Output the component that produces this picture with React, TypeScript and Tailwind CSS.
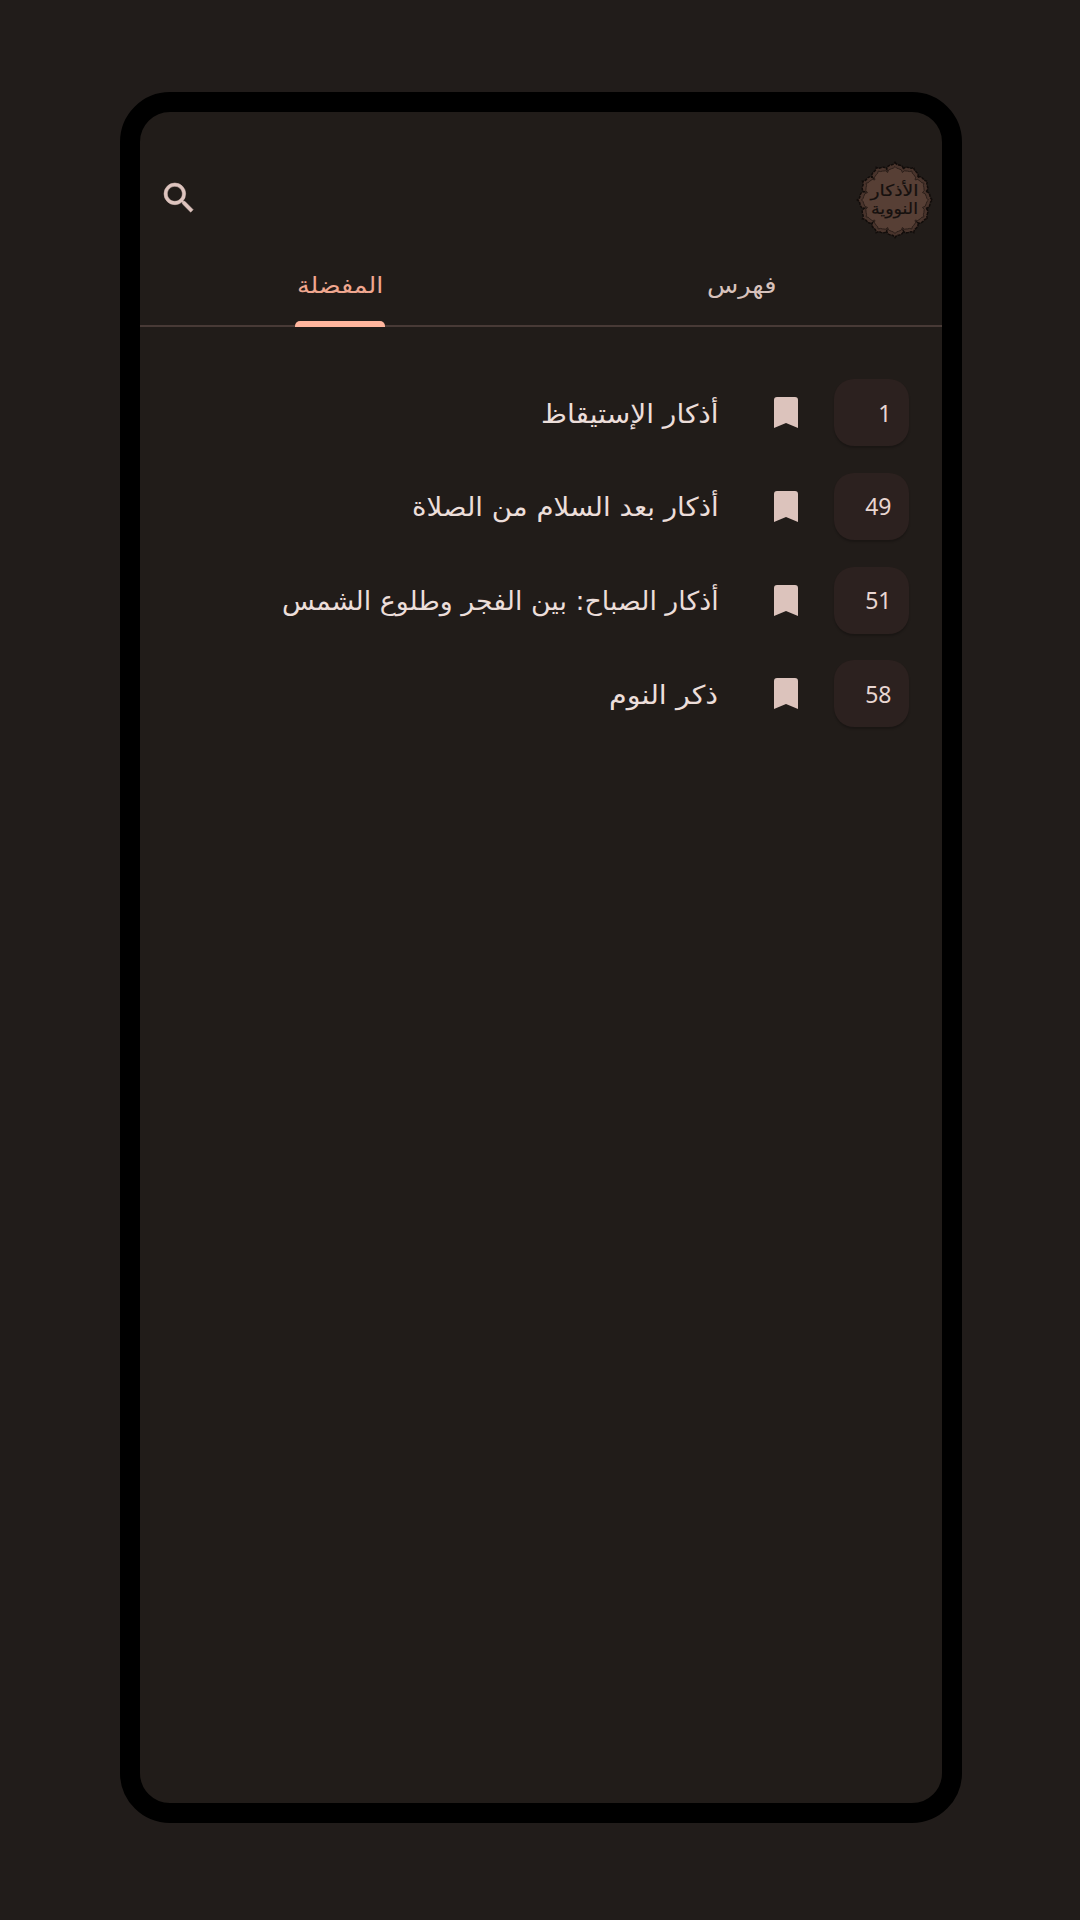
import React from "react";

const rows = [
  { n: "1", text: "أذكار الإستيقاظ", width: 178 },
  { n: "49", text: "أذكار بعد السلام من الصلاة", width: 307 },
  { n: "51", text: "أذكار الصباح: بين الفجر وطلوع الشمس", width: 437 },
  { n: "58", text: "ذكر النوم", width: 109 },
];

/* Arabic label condensed or widened to a fixed measure. */
function Label({ text, width, className }: { text: string; width: number; className: string }) {
  const ref = React.useRef<HTMLSpanElement>(null);
  const [scale, setScale] = React.useState(1);
  React.useLayoutEffect(() => {
    if (ref.current) setScale(width / ref.current.offsetWidth);
  }, [width]);
  return (
    <div className="flex justify-start" style={{ width }}>
      <span
        ref={ref}
        className={`block shrink-0 origin-right whitespace-nowrap ${className}`}
        style={{ transform: `scaleX(${scale})` }}
      >
        {text}
      </span>
    </div>
  );
}

function badgePath(r: number) {
  const petals = 12;
  let d = "";
  for (let i = 0; i < petals; i++) {
    const step = (Math.PI * 2) / petals;
    const a = i * step - Math.PI / 2;
    const p = (ang: number, rad: number) =>
      `${(37 + Math.cos(ang) * rad).toFixed(2)} ${(37 + Math.sin(ang) * rad).toFixed(2)}`;
    if (i === 0) d += `M${p(a, r)}`;
    d += `Q${p(a + step * 0.08, r * 0.94)} ${p(a + step * 0.22, r * 0.94)}`;
    d += `Q${p(a + step * 0.45, r * 0.94)} ${p(a + step * 0.5, r * 0.85)}`;
    d += `Q${p(a + step * 0.55, r * 0.94)} ${p(a + step * 0.78, r * 0.94)}`;
    d += `Q${p(a + step * 0.92, r * 0.94)} ${p(a + step, r)}`;
  }
  return d + "Z";
}

function Logo() {
  return (
    <svg width="74" height="74" viewBox="0 0 74 74" className="mt-px block overflow-visible">
      <path d={badgePath(37.5)} fill="#49342c" stroke="#110c0a" strokeWidth="1.5" strokeDasharray="3 0.8" />
      <path d={badgePath(33.5)} fill="#573f35" stroke="#2b1e19" strokeWidth="1" />
      <g
        fill="#15100e"
        stroke="#15100e"
        strokeWidth="0.2"
        textAnchor="middle"
        fontFamily="'DejaVu Sans', sans-serif"
        fontSize="16"
        direction="rtl"
      >
        <text x="36.5" y="32.5" textLength="48" lengthAdjust="spacingAndGlyphs">الأذكار</text>
        <text x="36.5" y="51.3" textLength="47" lengthAdjust="spacingAndGlyphs">النووية</text>
      </g>
    </svg>
  );
}

export default function App() {
  return (
    <div
      dir="rtl"
      className="h-[1920px] w-[1080px] overflow-hidden bg-[#211c1a] pt-[92px] pr-[118px] font-['DejaVu_Sans',sans-serif]"
    >
      <div className="h-[1731px] w-[842px] rounded-[50px] border-20 border-black bg-[#211c19]">
        <header className="flex h-[137px] items-start justify-between pt-[50px] pr-[10px] pl-[19px]">
          <Logo />
          <svg
            width="40"
            height="40"
            viewBox="0 0 24 24"
            className="mt-4 block"
            fill="#dec4be"
            stroke="#dec4be"
            strokeWidth="0.3"
          >
            <path d="M15.5 14h-.79l-.28-.27A6.47 6.47 0 0 0 16 9.5 6.5 6.5 0 1 0 9.5 16c1.61 0 3.09-.59 4.23-1.57l.27.28v.79l5 4.99L20.49 19l-4.99-5zm-6 0C7.01 14 5 11.99 5 9.5S7.01 5 9.5 5 14 7.01 14 9.5 11.99 14 9.5 14z" />
          </svg>
        </header>

        <nav className="flex h-[78px] border-b-2 border-[#483a36]">
          <div className="flex flex-1 justify-center pt-[20px]">
            <Label text="فهرس" width={69} className="text-[23px] leading-8 text-[#d8c2bc]" />
          </div>
          <div className="flex flex-1 flex-col items-center pt-[20px] pr-px">
            <Label text="المفضلة" width={86} className="text-[23px] leading-8 text-[#f0a78f]" />
            <div className="mt-5 h-[6px] w-[90px] shrink-0 rounded-t-[5px] bg-[#ffb59d]" />
          </div>
        </nav>

        <main className="flex flex-col gap-[26.8px] pt-[52px] pr-[33.5px]">
          {rows.map((r) => (
            <div key={r.n} className="flex h-[67px] items-center">
              <div className="flex h-[67px] w-[75px] items-center justify-start rounded-[20px] bg-[#2c211f] pr-[17px] shadow-[0_2px_2px_rgba(0,0,0,0.22)]">
                <span className="font-['Noto_Sans',sans-serif] text-[23px] leading-8 text-[#e8d6d1]">{r.n}</span>
              </div>
              <svg width="24" height="31" viewBox="0 0 24 31" className="mr-[35.5px] block" fill="#dcc3bc">
                <path d="M3 0H21Q24 0 24 3V31L12 26L0 31V3Q0 0 3 0Z" />
              </svg>
              <div className="mr-[55.5px] pt-[2px]">
                <Label text={r.text} width={r.width} className="text-[26px] leading-9 text-[#ecdeda]" />
              </div>
            </div>
          ))}
        </main>
      </div>
    </div>
  );
}
